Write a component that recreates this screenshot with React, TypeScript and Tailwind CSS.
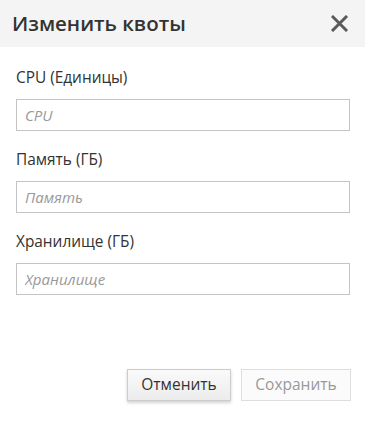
import React from 'react';

const fields = [
  { label: 'CPU (Единицы)', placeholder: 'CPU' },
  { label: 'Память (ГБ)', placeholder: 'Память' },
  { label: 'Хранилище (ГБ)', placeholder: 'Хранилище' },
];

const App: React.FC = () => {
  return (
    <div className="w-[365px] h-[421px] bg-white flex flex-col font-['Open_Sans',sans-serif]">
      {/* Header */}
      <div className="h-[47px] bg-[#f4f4f4] flex items-center justify-between pl-3 pr-[17px]">
        <h2 className="text-[20.5px] font-semibold text-[#333333] leading-none">Изменить квоты</h2>
        <button className="text-[#555555]">
          <svg width="17" height="17" viewBox="0 0 17 17">
            <path d="M2 2 L15 15 M15 2 L2 15" stroke="#5a5a5a" strokeWidth="3" strokeLinecap="square" />
          </svg>
        </button>
      </div>

      {/* Fields */}
      <div className="px-4 pt-[21px] flex flex-col gap-[19px]">
        {fields.map(f => (
          <div key={f.label} className="flex flex-col">
            <label className="text-[15.4px] text-[#333333] leading-5 mb-[11px]">{f.label}</label>
            <input
              type="text"
              placeholder={f.placeholder}
              className="w-[334px] h-[32px] border border-[#c4c4c4] px-2 text-[15px] text-[#333333] placeholder:italic placeholder:text-[#999999] outline-none"
            />
          </div>
        ))}
      </div>

      {/* Footer */}
      <div className="mt-auto flex justify-end gap-[10px] pr-[14px] pb-[20px]">
        <button className="w-[104px] h-[32px] border border-[#cccccc] bg-gradient-to-b from-[#fafafa] to-[#ececec] shadow-[0_2px_3px_rgba(0,0,0,0.18)] text-[15.5px] text-[#333333]">
          Отменить
        </button>
        <button disabled className="w-[110px] h-[32px] border border-[#dddddd] bg-[#fbfbfb] text-[15.5px] text-[#999999]">
          Сохранить
        </button>
      </div>
    </div>
  );
};

export default App;
